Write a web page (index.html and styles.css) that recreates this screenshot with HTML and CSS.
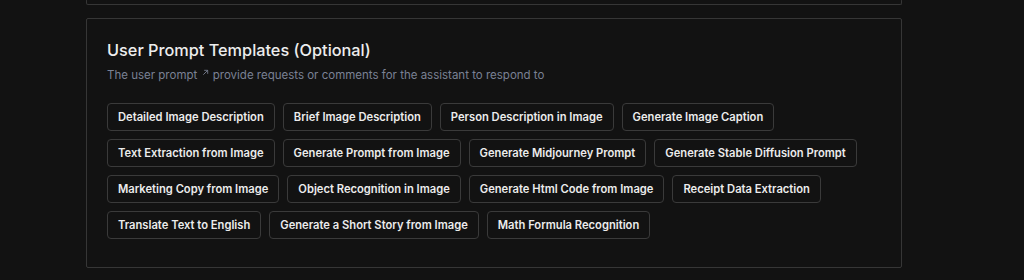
FILE: index.html
```html
<!DOCTYPE html>
<html lang="en">
<head>
    <meta charset="UTF-8">
    <meta name="viewport" content="width=device-width, initial-scale=1.0">
    <title>User Prompt Templates</title>
    <link rel="stylesheet" href="styles.css">
</head>
<body>

    <div class="page">
        <section class="card card-prev"></section>

        <section class="card">
            <h2 class="card-title">User Prompt Templates (Optional)</h2>
            <p class="card-desc">
                The user prompt
                <svg class="link-arrow" width="7" height="7" viewBox="0 0 8 8"><path d="M1.5 6.5 L6.5 1.5 M2.5 1.5 H6.5 V5.5" fill="none" stroke="currentColor" stroke-width="1"/></svg>
                provide requests or comments for the assistant to respond to
            </p>

            <div class="templates">
                <button class="tpl">Detailed Image Description</button>
                <button class="tpl">Brief Image Description</button>
                <button class="tpl">Person Description in Image</button>
                <button class="tpl">Generate Image Caption</button>
                <button class="tpl">Text Extraction from Image</button>
                <button class="tpl">Generate Prompt from Image</button>
                <button class="tpl">Generate Midjourney Prompt</button>
                <button class="tpl">Generate Stable Diffusion Prompt</button>
                <button class="tpl">Marketing Copy from Image</button>
                <button class="tpl">Object Recognition in Image</button>
                <button class="tpl">Generate Html Code from Image</button>
                <button class="tpl">Receipt Data Extraction</button>
                <button class="tpl">Translate Text to English</button>
                <button class="tpl">Generate a Short Story from Image</button>
                <button class="tpl">Math Formula Recognition</button>
            </div>
        </section>
    </div>

</body>
</html>
```

FILE: styles.css
```css
/* base */
:root {
    --bg: #121212;
    --border: #363636;
    --btn-border: #3a3a3a;
    --text: #ececec;
    --muted: #7a8194;
}

* { margin: 0; padding: 0; box-sizing: border-box; }
body { font-family: Inter, "Noto Sans", sans-serif; background: var(--bg); color: var(--text); }

.page {
    width: 816px;
    margin-left: 86px;
    display: flex;
    flex-direction: column;
    gap: 13px;
}

/* cards */
.card {
    border: 1px solid var(--border);
    border-radius: 2px;
    padding: 20px 20px 28px;
}

.card-prev {
    height: 6px;
    margin-top: -1px;
    border-top: none;
    padding: 0;
}

.card-title { font-size: 16.3px; font-weight: 500; line-height: 22px; color: #ededed; }

.card-desc {
    font-size: 11.5px;
    line-height: 16px;
    color: var(--muted);
    margin-top: 6px;
}

.link-arrow { vertical-align: 3px; margin: 0 1px; }

/* template buttons */
.templates {
    margin-top: 20px;
    display: flex;
    flex-wrap: wrap;
    gap: 8px;
}

.tpl {
    height: 28px;
    padding: 0 10px;
    background: transparent;
    border: 1px solid var(--btn-border);
    border-radius: 4px;
    color: var(--text);
    font-family: inherit;
    font-size: 11.2px;
    font-weight: 600;
    cursor: pointer;
}

.tpl:hover { background: #1c1c1c; }
```
